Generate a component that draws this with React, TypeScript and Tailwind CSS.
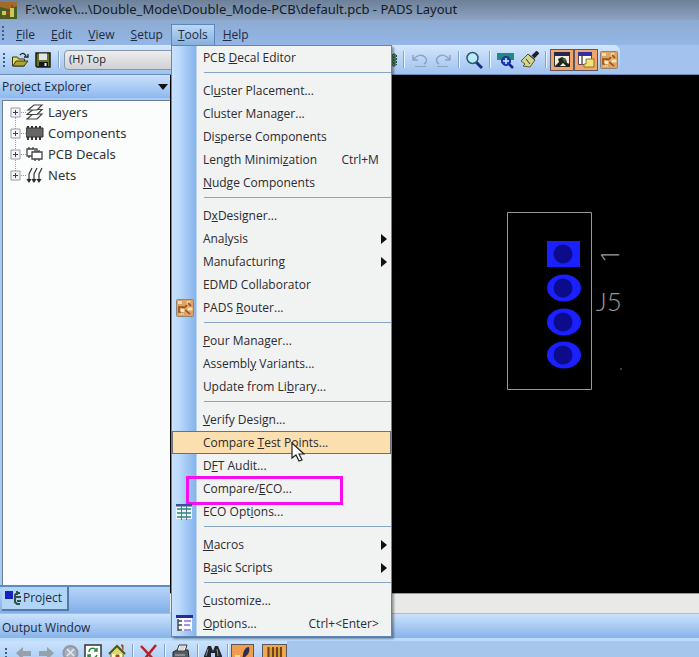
import { Fragment, type ReactNode } from "react";

type Item = { label: string; shortcut?: string; submenu?: boolean; icon?: ReactNode; active?: boolean; marked?: boolean };

// "&" stands before the access key of a label
function Label({ text }: { text: string }) {
    const at = text.indexOf("&");
    if (at < 0) return <span>{text}</span>;
    return (
        <span>
            {text.slice(0, at)}
            <u className="underline-offset-1">{text[at + 1]}</u>
            {text.slice(at + 2)}
        </span>
    );
}

function RouterIcon() {
    return (
        <svg width="18" height="18" viewBox="0 0 18 18">
            <rect x="0.5" y="0.5" width="17" height="17" rx="1" fill="#dfa263" stroke="#8d8378" />
            <path d="M2 2h4v3H2zM11 2h4l-5 5z" fill="#f6d9a4" />
            <path d="M3 8h4v5H3zM8 9l3-3M9 11l5 4M12 4l3 3" fill="none" stroke="#8a4f1c" strokeWidth="1.5" />
            <path d="M5 10h3v3H5zM12 9h4v2h-4zM3 15h5" fill="#fff0cf" stroke="#f6d9a4" />
        </svg>
    );
}

function EcoIcon() {
    return (
        <svg width="16" height="16" viewBox="0 0 16 16">
            <path d="M0 1h16v14H0z" fill="#eef4f8" />
            <path d="M0 0h16v2.500H0z" fill="#3c4f9c" />
            <path d="M1 5h14M1 9h14M1 13h14" stroke="#53a58f" strokeWidth="2" strokeDasharray="4 1" />
            <path d="M5.500 2v14M10.500 2v14" stroke="#557799" />
        </svg>
    );
}

function OptionsIcon() {
    return (
        <svg width="17" height="17" viewBox="0 0 17 17">
            <path d="M1 1h15v15H1z" fill="#fafbff" />
            <path d="M0 0h17v3H0z" fill="#29299a" />
            <path d="M2 4v12M2 6h4M2 10h4M2 15h4" stroke="#444" strokeWidth="1.500" />
            <path d="M8 6h7M8 10h6M8 15h7" stroke="#7d78d8" strokeWidth="1.500" />
        </svg>
    );
}

const groups: Item[][] = [
    [{ label: "PCB &Decal Editor" }],
    [
        { label: "Cl&uster Placement..." },
        { label: "Cluster Mana&ger..." },
        { label: "Di&sperse Components" },
        { label: "Length Minimi&zation", shortcut: "Ctrl+M" },
        { label: "&Nudge Components" },
    ],
    [
        { label: "D&xDesigner..." },
        { label: "Ana&lysis", submenu: true },
        { label: "Manufacturin&g", submenu: true },
        { label: "EDMD Collaborator" },
        { label: "PADS &Router...", icon: <RouterIcon /> },
    ],
    [{ label: "&Pour Manager..." }, { label: "Assembl&y Variants..." }, { label: "Update from Li&brary..." }],
    [
        { label: "&Verify Design..." },
        { label: "Compare &Test Points...", active: true },
        { label: "D&FT Audit..." },
        { label: "Compare/&ECO...", marked: true },
        { label: "ECO Opt&ions...", icon: <EcoIcon /> },
    ],
    [
        { label: "&Macros", submenu: true },
        { label: "B&asic Scripts", submenu: true },
    ],
    [{ label: "&Customize..." }, { label: "&Options...", shortcut: "Ctrl+<Enter>", icon: <OptionsIcon /> }],
];

function ToolsMenu() {
    return (
        <div
            role="menu"
            className="absolute top-full -left-px z-20 w-[221px] border border-[#5b87bd] bg-[#f1f2f2] bg-[linear-gradient(90deg,#c9e2fd_0px,#b9d8fb_8px,#85b3ec_24px,#f1f2f2_25px)] pb-px text-xs shadow-[2px_2px_2px_rgba(0,0,0,0.35)]"
        >
            {groups.map((group, g) => (
                <Fragment key={g}>
                    {g > 0 && <div role="separator" className="mt-[3px] mb-[6px] ml-8 h-px bg-[#86a5c6]" />}
                    {group.map((item) => (
                        <button
                            key={item.label}
                            role="menuitem"
                            className={
                                "relative flex h-[23px] w-full items-center pr-1 text-left whitespace-nowrap text-[#2b2b30] " +
                                (item.active ? "bg-[#fbdfae] outline-1 -outline-offset-1 outline-[#6c7078]" : "")
                            }
                        >
                            <span className="flex w-[31px] shrink-0 items-center pl-1">{item.icon}</span>
                            <Label text={item.label} />
                            {item.shortcut && <span className="mr-2 ml-auto">{item.shortcut}</span>}
                            {item.submenu && (
                                <svg className="ml-auto" width="6" height="10" viewBox="0 0 6 10">
                                    <path d="M0 0l6 5-6 5z" fill="#111" />
                                </svg>
                            )}
                            {item.marked && <span className="absolute -top-px right-[48px] -bottom-[5px] left-[14px] border-3 border-[#f80cf0]" />}
                            {item.active && (
                                <svg className="absolute top-[11px] left-[119px] z-10" width="14" height="20" viewBox="0 0 14 20">
                                    <path d="M1 1v15l4-3 3 6 3-1-3-6h5z" fill="#fff" stroke="#222" strokeWidth="1.200" />
                                </svg>
                            )}
                        </button>
                    ))}
                </Fragment>
            ))}
        </div>
    );
}

function MenuBar() {
    return (
        <nav className="flex h-[25px] items-end bg-gradient-to-b from-[#8eaad0] to-[#94b7e7] pl-px text-xs text-[#1f2b40]">
            <Grip />
            <div className="flex h-[21px] items-stretch pl-[3px]">
                {["&File", "&Edit", "&View", "&Setup"].map((name) => (
                    <button key={name} className="px-2">
                        <Label text={name} />
                    </button>
                ))}
                <div className="relative flex border border-b-0 border-[#5b87bd] bg-gradient-to-b from-[#b9d9f4] to-[#86b0df]">
                    <button className="px-[6px]">
                        <Label text="&Tools" />
                    </button>
                    <ToolsMenu />
                </div>
                <button className="px-2">
                    <Label text="&Help" />
                </button>
            </div>
        </nav>
    );
}

function Grip() {
    return (
        <svg className="shrink-0 self-center" width="4" height="16" viewBox="0 0 4 16">
            <path d="M2 1v15" stroke="#3d5f8f" strokeWidth="2" strokeDasharray="2 2" />
        </svg>
    );
}

function Divider({ className = "" }: { className?: string }) {
    return <span className={"h-[17px] w-px shrink-0 bg-[#7fa3d0] shadow-[1px_0_0_#e8f3ff] " + className} />;
}

function FolderIcon() {
    return (
        <svg width="17" height="16" viewBox="0 0 17 16">
            <path d="M0.500 14V5h5l1 2h6v7z" fill="#e9dc58" stroke="#3b3a12" />
            <path d="M1 14l3-5h12l-4 5z" fill="#b0a338" stroke="#3b3a12" />
            <path d="M8 3c3-3 5-1 6 1m2-2v3h-4" fill="none" stroke="#222" strokeWidth="1.300" />
        </svg>
    );
}

function SaveIcon() {
    return (
        <svg width="16" height="16" viewBox="0 0 16 16">
            <path d="M1 1h14v14H2l-1-1z" fill="#66741f" stroke="#1b1d14" strokeWidth="1.500" />
            <path d="M4 1.500h8V8H4z" fill="#dfe5ea" />
            <path d="M4 10h9v5H4z" fill="#16181b" />
            <path d="M9.500 11h2v3h-2z" fill="#eee" />
        </svg>
    );
}

function TurnIcon({ flip }: { flip?: boolean }) {
    return (
        <svg width="16" height="16" viewBox="0 0 16 16">
            <g transform={flip ? "translate(16 0) scale(-1 1)" : undefined} fill="none" stroke="#8da3bf">
                <path d="M1 3v5h5M2 7c3-4 8-5 11-2s1 6-1 7" strokeWidth="1.500" />
                <path d="M3 14.500h11" />
            </g>
        </svg>
    );
}

function ToolBar() {
    return (
        <div className="flex h-[30px] shrink-0 items-stretch border-b border-[#6c8db9] bg-[#a3c3ee]">
            <div className="flex items-center rounded-r-md bg-gradient-to-b from-[#d3e6fc] to-[#9fc2f0] pr-[2px] pl-[2px]">
                <Grip />
                <button aria-label="Open" className="ml-[6px]"><FolderIcon /></button>
                <button aria-label="Save" className="ml-[6px]"><SaveIcon /></button>
                <Divider className="ml-[7px]" />
                <select aria-label="Layer" className="ml-[5px] h-5 w-[300px] appearance-none rounded-sm border border-[#8797aa] bg-gradient-to-b from-[#eeeeef] to-[#d0d1d5] pl-1 text-[11px] text-[#222]">
                    <option>(H) Top</option>
                </select>
                <button aria-label="Board" className="ml-[14px]">
                    <svg width="20" height="16" viewBox="0 0 20 16">
                        <path d="M2 2h16v12H2z" fill="#4c8063" />
                        <path d="M16 1v14M18.500 3v10" stroke="#1f4b35" strokeDasharray="2 1" />
                    </svg>
                </button>
                <Divider className="ml-[5px]" />
                <button aria-label="Undo" className="ml-2"><TurnIcon /></button>
                <button aria-label="Redo" className="ml-[7px]"><TurnIcon flip /></button>
                <Divider className="ml-[7px]" />
                <button aria-label="Zoom" className="ml-[6px]">
                    <svg width="18" height="18" viewBox="0 0 18 18">
                        <path d="M11 11l6 6" stroke="#1d2d80" strokeWidth="3" />
                        <circle cx="7.500" cy="7" r="5.500" fill="#b8ecfb" stroke="#2c5670" strokeWidth="1.500" />
                    </svg>
                </button>
                <Divider className="ml-[6px]" />
                <button aria-label="Zoom board" className="ml-[7px]">
                    <svg width="18" height="18" viewBox="0 0 18 18">
                        <path d="M0 2h17v7h-3v3H4V9H0z" fill="#258684" />
                        <path d="M12 13l4 4" stroke="#17258d" strokeWidth="2.500" />
                        <circle cx="9" cy="10" r="4.500" fill="#2438bd" stroke="#172a8d" />
                        <path d="M6 10h6M9 7v6" stroke="#cbefff" strokeWidth="1.500" />
                    </svg>
                </button>
                <button aria-label="Redraw" className="ml-[6px]">
                    <svg width="18" height="18" viewBox="0 0 18 18">
                        <path d="M17 1l-5 5" stroke="#222" strokeWidth="4" />
                        <path d="M7 3l7 6-5 7-7-1 2-2-4-3z" fill="#d5d58e" stroke="#555b35" />
                        <path d="M8 4l6 5M5 8l4 5" stroke="#333" />
                    </svg>
                </button>
                <Divider className="ml-[6px]" />
                <button aria-label="Drafting" aria-pressed="true" className="ml-1 border border-[#5a5662] bg-[#f0a56c] px-[2px] py-px">
                    <svg width="18" height="18" viewBox="0 0 18 18">
                        <path d="M1.500 2.500h15v13h-15z" fill="#f4eee2" stroke="#333" />
                        <path d="M1 1h16v4H1z" fill="#28274e" />
                        <path d="M2 15l4-4-1-3 4-2 4 2 1 4 3 1v3h-3l-4-4-4 4z" fill="#24251d" />
                        <path d="M9 7l4 1-1 4z" fill="#48713a" />
                    </svg>
                </button>
                <button aria-label="Windows" aria-pressed="true" className="border border-[#5a5662] bg-[#f0a56c] px-[2px] py-px">
                    <svg width="18" height="18" viewBox="0 0 18 18">
                        <path d="M1.500 2.500h13v11h-13z" fill="#fff" stroke="#554460" />
                        <path d="M1 1h14v4H1z" fill="#32309a" />
                        <path d="M5 5v9" stroke="#665544" strokeWidth="1.500" />
                        <path d="M9 8h8v8H7v-3h2z" fill="#f4e27a" stroke="#8d7524" />
                    </svg>
                </button>
                <button aria-label="Router" className="ml-[2px]"><RouterIcon /></button>
            </div>
        </div>
    );
}

const tree = [
    {
        name: "Layers",
        icon: (
            <g fill="#fff" stroke="#444" strokeWidth="1.200">
                <path d="M1 15l6-5h9l-5 5z" />
                <path d="M1 10.500l6-5h9l-5 5z" />
                <path d="M2 6l6-5h8l-5 5z" />
            </g>
        ),
    },
    {
        name: "Components",
        icon: (
            <g>
                <path d="M2 1v14M6 1v14M10 1v14M14 1v14" stroke="#333" strokeWidth="2" />
                <path d="M0 3h17v9H0z" fill="#666" stroke="#333" />
            </g>
        ),
    },
    {
        name: "PCB Decals",
        icon: (
            <g fill="#fff" stroke="#444" strokeWidth="1.300">
                <path d="M1 3h10v7H1zM3 1v2M7 1v2M3 10v2" />
                <path d="M6 6h10v7H6zM9 4v2M13 4v2M9 13v2M13 13v2" />
            </g>
        ),
    },
    {
        name: "Nets",
        icon: (
            <g fill="none" stroke="#333" strokeWidth="1.200">
                <path d="M6 1L3 7v7M11 1L8 7v7M16 1l-3 6v7" />
                <path d="M1 12l2 3 2-3M6 12l2 3 2-3M11 12l2 3 2-3" fill="#222" />
            </g>
        ),
    },
];

function ProjectExplorer() {
    return (
        <aside className="flex w-[170px] shrink-0 flex-col bg-[#a9caf5]">
            <header className="flex h-[23px] items-center justify-between bg-gradient-to-b from-[#cbe1fb] to-[#8db8ef] pr-[2px] pl-[2px] text-xs text-[#1e2a3d]">
                <h2>Project Explorer</h2>
                <svg width="10" height="6" viewBox="0 0 10 6">
                    <path d="M0 0h10L5 6z" fill="#111" />
                </svg>
            </header>
            <ul className="relative mt-[2px] ml-[2px] flex-1 border-t border-l border-[#6d8095] bg-[#fbfdfd] pt-px font-['Noto_Sans',sans-serif] text-[13px] text-[#333]">
                <li aria-hidden="true" className="absolute top-4 left-3 h-[62px] border-l border-dotted border-[#999]" />
                {tree.map(({ name, icon }) => (
                    <li key={name} className="relative flex h-[21px] items-center pl-[7px]">
                        <button aria-label={"Expand " + name}>
                            <svg width="11" height="11" viewBox="0 0 11 11">
                                <path d="M1 1h9v9H1z" fill="#f5f5f8" stroke="#9a9aa5" />
                                <path d="M3 5.500h5M5.500 3v5" stroke="#3d3d60" />
                            </svg>
                        </button>
                        <span className="w-[5px] border-t border-dotted border-[#999]" />
                        <svg className="mr-1" width="18" height="17" viewBox="0 0 18 17">{icon}</svg>
                        {name}
                    </li>
                ))}
            </ul>
            <div className="h-[28px] border-t-2 border-[#5c8bc7] bg-gradient-to-b from-[#b6d4f8] to-[#82afe7] pl-[2px]">
                <button className="flex h-[24px] items-center gap-px border-r-2 border-b-2 border-[#5279ac] bg-[#b0d5f7] pr-[5px] pl-[3px] text-xs text-[#1e2a3d]">
                    <svg width="17" height="16" viewBox="0 0 17 16">
                        <path d="M0 1h8v8H0z" fill="#1620bf" />
                        <path d="M15 3h-3l-2 2v7l2 2h3M10 7h6M12 1v4M12 11h4" fill="none" stroke="#31503f" strokeWidth="2" />
                    </svg>
                    Project
                </button>
            </div>
        </aside>
    );
}

function BoardCanvas() {
    return (
        <main className="flex min-w-0 flex-1 flex-col">
            <div className="relative flex-1 overflow-hidden bg-black">
                <svg className="absolute top-[136px] right-[69px]" width="124" height="180" viewBox="0 0 124 180">
                    <path d="M1.500 1.500h84v177h-84z" fill="none" stroke="#989898" />
                    <path d="M41 30h33v26H41z" fill="#1a20ff" />
                    <g fill="#1a20ff">
                        <ellipse cx="58" cy="77" rx="17" ry="13.500" />
                        <ellipse cx="58" cy="111" rx="17" ry="13.500" />
                        <ellipse cx="58" cy="144" rx="17" ry="13.500" />
                    </g>
                    <g fill="#0b0b8c">
                        <circle cx="57" cy="43" r="9.500" />
                        <circle cx="57" cy="77" r="9.500" />
                        <circle cx="57" cy="111" r="9.500" />
                        <circle cx="57" cy="144" r="9.500" />
                    </g>
                    <g fill="#9a9a9a" fontWeight="300" fontSize="26">
                        <text x="90" y="100" fontFamily="Lato, sans-serif">J5</text>
                        <text transform="translate(113 52) rotate(-90)" fontFamily="Open Sans, sans-serif">1</text>
                    </g>
                    <circle cx="115" cy="158" r="0.800" fill="#888" />
                </svg>
            </div>
            <div className="h-[20px] border-t border-[#999] bg-[#e9eae8]" />
        </main>
    );
}

function OutputBar() {
    return (
        <footer className="shrink-0">
            <h2 className="flex h-[25px] items-center border-t border-[#9fbfe6] bg-gradient-to-b from-[#cbe2fc] to-[#87b3ea] pt-[3px] pl-[2px] text-xs text-[#1e2a3d]">
                Output Window
            </h2>
            <div className="h-[3px] bg-[#bcdcfb]" />
            <div className="flex h-[16px] items-start overflow-hidden bg-[#a6c6ec]">
                <div className="flex items-start bg-gradient-to-b from-[#cbe2fc] to-[#a5c8f3] pt-[3px] pl-1">
                    <Grip />
                    <button aria-label="Back" className="ml-2">
                        <svg width="16" height="18" viewBox="0 0 16 18"><path d="M0 9l7-6v4h8v5H7v4z" fill="#98a0ac" /></svg>
                    </button>
                    <button aria-label="Forward" className="ml-[7px]">
                        <svg width="16" height="18" viewBox="0 0 16 18"><path d="M15 9L8 3v4H0v5h8v4z" fill="#98a0ac" /></svg>
                    </button>
                    <button aria-label="Stop" className="ml-[7px]">
                        <svg width="17" height="18" viewBox="0 0 17 18">
                            <circle cx="8.500" cy="9" r="7" fill="#a9b0ba" stroke="#8f97a3" strokeWidth="2" />
                            <path d="M5 5l7 7M12 5l-7 7" stroke="#e2e9f2" strokeWidth="1.500" />
                        </svg>
                    </button>
                    <button aria-label="Refresh" className="ml-[5px]">
                        <svg width="18" height="18" viewBox="0 0 18 18">
                            <path d="M1 1h16v17H1z" fill="#fff" stroke="#333" strokeWidth="1.500" />
                            <path d="M5 8c0-4 5-5 7-2M13 4v3h-3M5 11c1 4 6 4 8 0M4 14v-3h3" fill="none" stroke="#2c8b38" strokeWidth="1.500" />
                        </svg>
                    </button>
                    <button aria-label="Home" className="ml-[6px]">
                        <svg width="18" height="18" viewBox="0 0 18 18">
                            <path d="M3 9h12v9H3z" fill="#fff8c0" stroke="#6c6c20" />
                            <path d="M1 10l8-8 8 8" fill="#dada66" stroke="#4d551c" strokeWidth="2" />
                            <path d="M13 1h2v5M8 11h3v6H8z" fill="#a34420" stroke="#a34420" />
                        </svg>
                    </button>
                    <Divider className="ml-[6px]" />
                    <button aria-label="Delete" className="ml-[7px]">
                        <svg width="18" height="18" viewBox="0 0 18 18"><path d="M1 2l14 15M16 1L3 17" stroke="#b52025" strokeWidth="2.500" /></svg>
                    </button>
                    <Divider className="ml-[6px]" />
                    <button aria-label="Print" className="ml-[7px]">
                        <svg width="18" height="18" viewBox="0 0 18 18">
                            <path d="M1 8l4-2h11l1 8H1z" fill="#565c64" stroke="#222" />
                            <path d="M5 7l2-6h8l-2 6z" fill="#f7f7f7" stroke="#333" />
                            <path d="M8 3h5M7 5h5M3 11h10" stroke="#bbb" />
                        </svg>
                    </button>
                    <Divider className="ml-[7px]" />
                    <button aria-label="Find" className="ml-[6px]">
                        <svg width="18" height="18" viewBox="0 0 18 18">
                            <path d="M4 2h3l2 5 2-5h3l4 10v5h-7V9H7v8H0v-5z" fill="#22252a" />
                            <path d="M4 5L2 12M13 5l1 7" stroke="#8c929c" />
                        </svg>
                    </button>
                    <Divider className="ml-[5px]" />
                    <button aria-label="Edit log" aria-pressed="true" className="ml-[3px] border border-[#5a5662] bg-[#ef9e51] px-[2px]">
                        <svg width="17" height="20" viewBox="0 0 17 20">
                            <path d="M15 2c-4 0-6 5-6 8l-2 8 5-7c3-2 4-5 3-9z" fill="#30304d" />
                            <path d="M1 10h5v8H1z" fill="#ffd7a0" />
                        </svg>
                    </button>
                    <button aria-label="Columns" aria-pressed="true" className="ml-2 border border-[#5a5662] bg-[#efa850] px-[3px]">
                        <svg width="17" height="20" viewBox="0 0 17 20">
                            <path d="M1 3h15v16H1z" fill="#d7993c" />
                            <path d="M2.500 2v18M7 2v18M11 2v18M15 2v18" stroke="#6e4617" strokeWidth="2" />
                        </svg>
                    </button>
                </div>
            </div>
        </footer>
    );
}

export default function App() {
    return (
        <div className="flex h-screen flex-col overflow-hidden bg-[#9fc2ef] font-['Open_Sans','Noto_Sans',sans-serif]">
            <header className="relative z-10 shrink-0">
                <h1 className="flex h-5 items-center gap-[8px] bg-gradient-to-b from-[#6d8098] to-[#8ca3c1] font-['Noto_Sans',sans-serif] text-[13px] whitespace-nowrap text-[#121a26]">
                    <svg width="17" height="17" viewBox="0 0 17 17">
                        <path d="M0 0h17v17H0z" fill="#426026" />
                        <path d="M0 0h17v4l-8 3-9-2z" fill="#a56a27" />
                        <path d="M2 9h4v4H2zM10 6h4v9h-4z" fill="#d2c552" />
                        <path d="M6 11h4M12 6V3M4 13v3" stroke="#b23822" strokeWidth="2" />
                    </svg>
                    F:\woke\...\Double_Mode\Double_Mode-PCB\default.pcb - PADS Layout
                </h1>
                <MenuBar />
            </header>
            <ToolBar />
            <div className="flex min-h-0 flex-1">
                <ProjectExplorer />
                <BoardCanvas />
            </div>
            <OutputBar />
        </div>
    );
}
